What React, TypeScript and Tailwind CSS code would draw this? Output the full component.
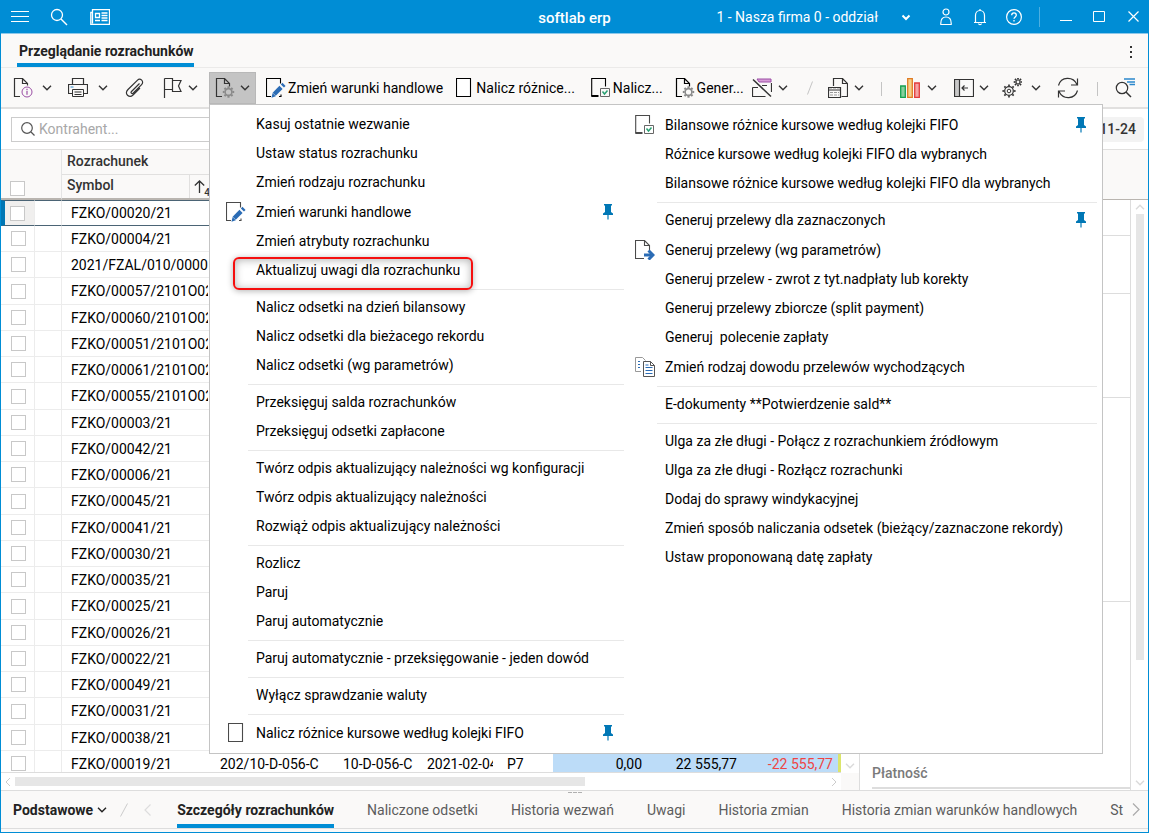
import React from 'react';

type IconName = 'pencil' | 'page' | 'check' | 'arrow' | 'copy';

type MenuEntry = {
  label: string;
  icon?: IconName;
  pinned?: boolean;
  marked?: boolean;
};

const leftMenu: MenuEntry[][] = [
  [
    { label: 'Kasuj ostatnie wezwanie' },
    { label: 'Ustaw status rozrachunku' },
    { label: 'Zmień rodzaju rozrachunku' },
    { label: 'Zmień warunki handlowe', icon: 'pencil', pinned: true },
    { label: 'Zmień atrybuty rozrachunku' },
    { label: 'Aktualizuj uwagi dla rozrachunku', marked: true },
  ],
  [
    { label: 'Nalicz odsetki na dzień bilansowy' },
    { label: 'Nalicz odsetki dla bieżacego rekordu' },
    { label: 'Nalicz odsetki (wg parametrów)' },
  ],
  [{ label: 'Przeksięguj salda rozrachunków' }, { label: 'Przeksięguj odsetki zapłacone' }],
  [
    { label: 'Twórz odpis aktualizujący należności wg konfiguracji' },
    { label: 'Twórz odpis aktualizujący należności' },
    { label: 'Rozwiąż odpis aktualizujący należności' },
  ],
  [{ label: 'Rozlicz' }, { label: 'Paruj' }, { label: 'Paruj automatycznie' }],
  [{ label: 'Paruj automatycznie - przeksięgowanie - jeden dowód' }],
  [{ label: 'Wyłącz sprawdzanie waluty' }],
  [{ label: 'Nalicz różnice kursowe według kolejki FIFO', icon: 'page', pinned: true }],
];

const rightMenu: MenuEntry[][] = [
  [
    { label: 'Bilansowe różnice kursowe według kolejki FIFO', icon: 'check', pinned: true },
    { label: 'Różnice kursowe według kolejki FIFO dla wybranych' },
    { label: 'Bilansowe różnice kursowe według kolejki FIFO dla wybranych' },
  ],
  [
    { label: 'Generuj przelewy dla zaznaczonych', pinned: true },
    { label: 'Generuj przelewy (wg parametrów)', icon: 'arrow' },
    { label: 'Generuj przelew - zwrot z tyt.nadpłaty lub korekty' },
    { label: 'Generuj przelewy zbiorcze (split payment)' },
    { label: 'Generuj  polecenie zapłaty' },
    { label: 'Zmień rodzaj dowodu przelewów wychodzących', icon: 'copy' },
  ],
  [{ label: 'E-dokumenty **Potwierdzenie sald**' }],
  [
    { label: 'Ulga za złe długi - Połącz z rozrachunkiem źródłowym' },
    { label: 'Ulga za złe długi - Rozłącz rozrachunki' },
    { label: 'Dodaj do sprawy windykacyjnej' },
    { label: 'Zmień sposób naliczania odsetek (bieżący/zaznaczone rekordy)' },
    { label: 'Ustaw proponowaną datę zapłaty' },
  ],
];

const symbols = [
  'FZKO/00020/21',
  'FZKO/00004/21',
  '2021/FZAL/010/0000',
  'FZKO/00057/2101O02',
  'FZKO/00060/2101O02',
  'FZKO/00051/2101O02',
  'FZKO/00061/2101O02',
  'FZKO/00055/2101O02',
  'FZKO/00003/21',
  'FZKO/00042/21',
  'FZKO/00006/21',
  'FZKO/00045/21',
  'FZKO/00041/21',
  'FZKO/00030/21',
  'FZKO/00035/21',
  'FZKO/00025/21',
  'FZKO/00026/21',
  'FZKO/00022/21',
  'FZKO/00049/21',
  'FZKO/00031/21',
  'FZKO/00038/21',
  'FZKO/00019/21',
];

const bottomTabs = [
  'Szczegóły rozrachunków',
  'Naliczone odsetki',
  'Historia wezwań',
  'Uwagi',
  'Historia zmian',
  'Historia zmian warunków handlowych',
  'St',
];

const Svg: React.FC<{ w?: number; h?: number; className?: string; children: React.ReactNode }> = ({
  w = 20,
  h = 20,
  className = '',
  children,
}) => (
  <svg
    width={w}
    height={h}
    viewBox={`0 0 ${w} ${h}`}
    fill="none"
    stroke="currentColor"
    aria-hidden="true"
    className={`shrink-0 ${className}`}
  >
    {children}
  </svg>
);

const Chevron: React.FC<{ className?: string }> = ({ className = '' }) => (
  <Svg w={10} h={6} className={className}>
    <path d="M1 .8l4 4 4-4" strokeWidth={1.4} />
  </Svg>
);

const Gear: React.FC<{ x: number; y: number; r: number; width?: number; color?: string }> = ({
  x,
  y,
  r,
  width = 1.6,
  color = 'currentColor',
}) => (
  <g transform={`translate(${x} ${y})`} stroke={color}>
    <circle r={r} strokeWidth={width} />
    {[0, 45, 90, 135, 180, 225, 270, 315].map((a) => (
      <path key={a} d={`M0 ${-r - 0.5}v-1.8`} strokeWidth={width + 0.5} transform={`rotate(${a})`} />
    ))}
  </g>
);

const DocGear = () => (
  <Svg>
    <path d="M7 18.5H1.5V.5h8l5 5v3M9.5.5v5h5" strokeWidth={1.2} />
    <Gear x={13.5} y={14} r={3.4} color="#8a8a8a" />
  </Svg>
);

const PencilPage = () => (
  <Svg>
    <path d="M5 18.5H.5V.5h14v5M13 18.5h2v-2" strokeWidth={1.1} />
    <path d="M8.2 16.2l6.8-6.8" stroke="#2b6cb5" strokeWidth={4.4} />
    <path d="M6.6 15l3.200 3.200-4.300 1.500z" fill="#2b6cb5" stroke="none" />
    <path d="M16.400 8l1.600-1.600" stroke="#2b6cb5" strokeWidth={4.400} />
  </Svg>
);

const EmptyPage = () => (
  <Svg w={16}>
    <path d="M.5.5h14v18H.5z" strokeWidth={1.1} fill="#fff" />
  </Svg>
);

const CheckPage = () => (
  <Svg>
    <path d="M8 18H.7V.5h13.800v8" strokeWidth={1.1} />
    <path d="M.5 18H7" strokeWidth={2} />
    <path d="M9.500 10.500h9v8h-9z" stroke="#666" />
    <path d="M11.500 13.500l2 2.500 3-3.500" stroke="#2ba173" strokeWidth={1.5} />
  </Svg>
);

const menuIcons: Record<IconName, React.ReactNode> = {
  pencil: <PencilPage />,
  page: <EmptyPage />,
  check: <CheckPage />,
  arrow: (
    <Svg>
      <path d="M9 18.500H.5V.5h9l5 5V10M9.500.5v5h5" strokeWidth={1.1} />
      <path d="M9 15h9" stroke="#2b6cb5" strokeWidth={3} />
      <path d="M13.500 10.500L18 15l-4.500 4.500" stroke="#2b6cb5" strokeWidth={3} />
    </Svg>
  ),
  copy: (
    <Svg>
      <path d="M6 14.500H.5V.5h7l3 3" stroke="#999" />
      <path d="M3 4.500h2M3 7.500h2M3 10.500h2" stroke="#2b6cb5" />
      <path d="M8.500 4.500h7l4 4v11h-11zM15.500 4.500v4h4" stroke="#555" fill="#fff" />
      <path d="M10.500 10.500h7M10.500 13.500h7M10.500 16.500h7M10.500 8h3" stroke="#2b6cb5" />
    </Svg>
  ),
};

const Pin = () => (
  <Svg w={10} h={16} className="text-[#0077b5]">
    <path d="M1 0h8v1.500H8V8l2 1.500V11H0V9.500L2 8V1.500H1z" fill="currentColor" stroke="none" />
    <path d="M5 10v5.500" strokeWidth={1.200} />
  </Svg>
);

const MenuColumn: React.FC<{ groups: MenuEntry[][]; className: string }> = ({ groups, className }) => (
  <div className={className}>
    {groups.map((group, g) => (
      <React.Fragment key={g}>
        {g > 0 && (
          <div className="ml-[33px] flex h-2 items-center">
            <div className="h-px w-full bg-[#e8e8e8]" />
          </div>
        )}
        {group.map((item) => (
          <button
            key={item.label}
            role="menuitem"
            className={`relative flex w-full items-center text-left whitespace-pre ${item.icon ? 'h-[30px]' : 'h-[29px] pb-px'}`}
          >
            {item.marked && (
              <span className="absolute top-px left-[18px] h-[33px] w-[240px] rounded-md border-2 border-[#f50f0f] shadow-[0_1px_6px_rgba(0,0,0,0.3),inset_0_1px_9px_rgba(0,0,0,0.3)]" />
            )}
            <span className="flex w-[41px] shrink-0 justify-center text-[#4a4a4a]">
              {item.icon && menuIcons[item.icon]}
            </span>
            <span className="relative flex-1">{item.label}</span>
            {item.pinned && (
              <span className="mr-[11px]">
                <Pin />
              </span>
            )}
          </button>
        ))}
      </React.Fragment>
    ))}
  </div>
);

const TitleBar = () => (
  <header className="relative flex h-[33px] shrink-0 items-center bg-[#008dd5] pr-[9px] pl-[10px] text-white">
    <button aria-label="Menu">
      <Svg w={18} h={12}>
        <path d="M0 .5h18M0 5.500h18M0 10.500h18" strokeWidth={1.200} />
      </Svg>
    </button>
    <button aria-label="Szukaj" className="ml-[21px]">
      <Svg w={18} h={18}>
        <circle cx={7} cy={7} r={5.500} strokeWidth={1.300} />
        <path d="M11 11l6 6" strokeWidth={1.400} />
      </Svg>
    </button>
    <button aria-label="Wiadomości" className="ml-[22px]">
      <Svg w={20} h={16}>
        <path d="M2.500.5h17v15H.8V3.500h1.700zM2.500 3.500v11" strokeWidth={1.300} />
        <path d="M5.500 4.500h4v4h-4zM11.500 4h6M11.500 6.500h6M11.500 9h6M5 11.500h5M11.500 11.500h6" strokeWidth={1.300} />
      </Svg>
    </button>
    <h1 className="absolute left-1/2 -translate-x-1/2 pt-[3px] text-[15px] font-medium">softlab erp</h1>
    <button className="ml-auto flex items-center pt-px text-sm">
      1 - Nasza firma 0 - oddział
      <Svg w={10} h={7} className="ml-[23px]">
        <path d="M1.500 1.500L5 5l3.500-3.500" strokeWidth={2} />
      </Svg>
    </button>
    <button aria-label="Użytkownik" className="ml-[29px]">
      <Svg w={12} h={18}>
        <circle cx={6} cy={4} r={3} strokeWidth={1.200} />
        <path d="M.8 16.500c-.3-5.500 2-7.500 5.200-7.500s5.500 2 5.200 7.500z" strokeWidth={1.200} />
      </Svg>
    </button>
    <button aria-label="Powiadomienia" className="ml-[22px]">
      <Svg w={12} h={18}>
        <path d="M0 14.500h12M1.500 14.500V7.500C1.500 4.500 3.500 2.500 6 2.500s4.500 2 4.500 5v7M6 2.500V1M4.500 15.500c.3 1.500 2.700 1.500 3 0" strokeWidth={1.200} />
      </Svg>
    </button>
    <button aria-label="Pomoc" className="ml-5">
      <Svg w={16} h={16}>
        <circle cx={8} cy={8} r={7.400} strokeWidth={1.200} />
        <path d="M5.700 6.200c0-3 4.600-3 4.600 0 0 1.600-2.300 1.800-2.300 3.600M8 11v1.500" strokeWidth={1.300} />
      </Svg>
    </button>
    <span className="ml-[17px] h-5 w-px bg-white/30" />
    <button aria-label="Minimalizuj" className="ml-5">
      <Svg w={12} h={12}>
        <path d="M0 9.500h12" />
      </Svg>
    </button>
    <button aria-label="Maksymalizuj" className="ml-[21px]">
      <Svg w={12} h={12}>
        <path d="M.5.5h11v10H.5z" />
      </Svg>
    </button>
    <button aria-label="Zamknij" className="ml-[23px]">
      <Svg w={11} h={11}>
        <path d="M.5.500l10 10M10.500.5l-10 10" strokeWidth={1.200} />
      </Svg>
    </button>
  </header>
);

const ActionMenu = () => (
  <div
    role="menu"
    className="absolute top-full left-0 z-10 flex w-[894px] border border-[#c4c4c4] bg-white p-[5px] text-sm text-black"
  >
    <MenuColumn groups={leftMenu} className="w-[409px]" />
    <MenuColumn groups={rightMenu} className="flex-1" />
  </div>
);

const Toolbar = () => (
  <div className="flex h-[41px] shrink-0 items-start border-b-2 border-[#e1e0df] pl-3 text-sm text-[#333]">
    <button aria-label="Informacje" className="flex h-10 items-center">
      <Svg>
        <path d="M7 18.500H1.500V.5h8l5 5v2M9.500.5v5h5" strokeWidth={1.200} />
        <circle cx={14} cy={14} r={5} stroke="#9b4fa5" />
        <path d="M14 12.800v4M14 10.800v1.200" stroke="#9b4fa5" strokeWidth={1.200} />
      </Svg>
      <Chevron className="ml-[9px]" />
    </button>
    <button aria-label="Drukuj" className="ml-4 flex h-10 items-center">
      <Svg>
        <path d="M4.500 6V.5h11V6M4.500 15.500h-4v-9h19v9h-4" strokeWidth={1.200} />
        <path d="M4.500 11.500h11v7h-11zM6.500 14h7M6.500 16.500h7" />
        <path d="M2.500 9h3" stroke="#2b88cc" />
      </Svg>
      <Chevron className="ml-[10px]" />
    </button>
    <button aria-label="Załącznik" className="ml-[17px] flex h-10 items-center">
      <Svg>
        <path d="M14.500 5.500l-8 8c-1.200 1.200.4 2.800 1.600 1.600l8.500-8.500c3-3-1.300-7.300-4.300-4.300L3 11.500c-4.500 4.500 1.500 9 5 5.500l7-7" strokeWidth={1.200} />
      </Svg>
    </button>
    <button aria-label="Flaga" className="ml-[18px] flex h-10 items-center">
      <Svg>
        <path d="M1.500 20V.5M1.500.5h8v11h-8M9.500 2.500h8.500l-2.500 5.500 2.500 5.500H9.500v-2" strokeWidth={1.200} />
      </Svg>
      <Chevron className="ml-[5px]" />
    </button>
    <div className="relative mt-1 ml-[11px]">
      <button
        aria-label="Akcje"
        aria-haspopup="menu"
        aria-expanded="true"
        className="flex h-8 w-[47px] items-center border border-[#b8b8b8] bg-[#c4c4c4] pl-[5px]"
      >
        <DocGear />
        <Chevron className="ml-[5px]" />
      </button>
      <ActionMenu />
    </div>
    <button className="ml-[10px] flex h-10 items-center gap-[2px] text-black">
      <PencilPage />
      Zmień warunki handlowe
    </button>
    <button className="ml-[13px] flex h-10 items-center gap-1 text-black">
      <EmptyPage />
      Nalicz różnice...
    </button>
    <button className="ml-4 flex h-10 items-center gap-[2px] text-black">
      <CheckPage />
      Nalicz...
    </button>
    <button className="ml-3 flex h-10 items-center gap-[2px] text-black">
      <DocGear />
      Gener...
    </button>
    <button aria-label="Wyłącz filtr" className="ml-2 flex h-10 items-center">
      <Svg>
        <path d="M5 1h14v3H7z" fill="#d79bd7" stroke="#9b4fa5" />
        <path d="M19.500 5v9M.5 9.500v9h13M.5 9.500H6M10 7.500h5" strokeWidth={1.200} />
        <path d="M1 1.500l18 17" strokeWidth={1.500} />
      </Svg>
      <Chevron className="ml-[6px]" />
    </button>
    <Svg w={6} h={14} className="mt-[13px] ml-[19px] text-[#c4c4c4]">
      <path d="M.5 13.500l5-13" />
    </Svg>
    <button aria-label="Raporty" className="ml-[15px] flex h-10 items-center">
      <Svg>
        <path d="M5.500 8V.5h9l5 5v13h-6M14.500.5v5h5" strokeWidth={1.200} />
        <path d="M.5 9.500h12v10H.5zM.5 12h12" strokeWidth={1.200} />
        <path d="M1 11h11M2 14.500h9M2 17h9" stroke="#999" strokeDasharray="3 1" />
      </Svg>
      <Chevron className="ml-[6px]" />
    </button>
    <span className="mt-[14px] ml-[17px] h-[14px] w-px bg-[#c4c4c4]" />
    <button aria-label="Wykresy" className="ml-[18px] flex h-10 items-center">
      <Svg w={21} h={20}>
        <path d="M.7 8h4.600v11.300H.7z" fill="#86cf9c" stroke="#15a050" strokeWidth={1.300} />
        <path d="M7.700.7h4.600v18.600H7.700z" fill="#f6cf8a" stroke="#e07c24" strokeWidth={1.300} />
        <path d="M14.700 5h4.600v14.300h-4.600z" fill="#f5a3a3" stroke="#e23b3b" strokeWidth={1.300} />
      </Svg>
      <Chevron className="ml-[6px]" />
    </button>
    <button aria-label="Panel" className="ml-[17px] flex h-10 items-center">
      <Svg>
        <path d="M.5 1.500h5v17h-5z" fill="#c8c8c8" stroke="#888" />
        <path d="M.5 1.500h19v17H.5zM5.500 1.500v17M14 10H8M10.500 7.500L8 10l2.500 2.500" strokeWidth={1.200} />
      </Svg>
      <Chevron className="ml-[5px]" />
    </button>
    <button aria-label="Ustawienia" className="ml-[13px] flex h-10 items-center">
      <Svg>
        <Gear x={7} y={13} r={4.300} width={1.200} />
        <circle cx={7} cy={13} r={1.800} />
        <Gear x={16} y={4} r={2} width={1.200} />
      </Svg>
      <Chevron className="ml-[9px]" />
    </button>
    <button aria-label="Odśwież" className="ml-4 flex h-10 items-center">
      <Svg w={22} h={22}>
        <path d="M1.500 8.500C4-.5 16-1 20 7.500M20.500 1.500v6.500h-6.500M20.500 13.500C18 22.500 6 23 2 14.500M1.500 20.500V14H8" strokeWidth={1.200} />
      </Svg>
    </button>
    <span className="mt-[14px] ml-[18px] h-[14px] w-px bg-[#c4c4c4]" />
    <button aria-label="Szukaj w tabeli" className="ml-[17px] flex h-10 items-center">
      <Svg>
        <circle cx={7} cy={10} r={5.700} strokeWidth={1.200} />
        <path d="M11 14l5 5" strokeWidth={1.500} />
        <path d="M9 1h11M12 4h8M14.500 6.500H20" stroke="#2b88cc" strokeWidth={1.300} />
      </Svg>
    </button>
  </div>
);

const CheckBox: React.FC<{ label: string }> = ({ label }) => (
  <input
    type="checkbox"
    aria-label={label}
    className="block size-[15px] appearance-none border border-[#c8c8c8] bg-white"
  />
);

const DataTable = () => (
  <table className="w-full table-fixed border-separate border-spacing-0 text-sm text-black">
    <colgroup>
      <col className="w-[34px]" />
      <col className="w-[27px]" />
      <col className="w-[148px]" />
      <col className="w-[123px]" />
      <col className="w-[84px]" />
      <col className="w-[80px]" />
      <col className="w-[56px]" />
      <col className="w-[95px]" />
      <col className="w-[95px]" />
      <col />
    </colgroup>
    <thead className="bg-[#faf9f8] text-left text-[#333]">
      <tr className="h-[25px]">
        <th rowSpan={2} className="border-b-2 border-[#b9b5b0] p-0 pb-[2px] pl-[9px] align-bottom">
          <CheckBox label="Zaznacz wszystkie" />
        </th>
        <th rowSpan={2} className="border-r border-b-2 border-r-[#e4e4e4] border-b-[#b9b5b0]" />
        <th colSpan={8} className="border-b border-[#e1e0df] p-0 pb-[2px] pl-[5px] font-medium">
          Rozrachunek
        </th>
      </tr>
      <tr className="h-[25px]">
        <th className="border-b-2 border-[#b9b5b0] p-0 pl-[5px] font-medium">
          <div className="flex h-[23px] items-center">
            <span className="pb-[3px]">Symbol</span>
            <span className="ml-auto flex h-full items-center border-l border-[#e1e0df] pl-1">
              <Svg w={11} h={13}>
                <path d="M5.500 13V1M.8 5.500L5.500 1l4.700 4.500" strokeWidth={1.300} />
              </Svg>
              <span className="-ml-px pt-3 text-[10px] leading-none">4</span>
            </span>
          </div>
        </th>
        <th colSpan={7} className="border-b-2 border-[#b9b5b0]" />
      </tr>
    </thead>
    <tbody>
      {symbols.map((symbol, i) => {
        const selected = i === 0;
        const last = i === symbols.length - 1;
        const line = selected ? 'border-y border-y-[#4b6475]' : 'border-b border-b-[#ececec]';
        return (
          <tr key={symbol} className="h-[26px] [&:nth-child(4n)]:h-[27px]">
            <td
              className={`border-r border-r-[#ececec] p-0 ${line} ${selected ? 'border-l-4 border-l-[#0077b5] bg-[#f0efee] pl-[5px]' : 'pl-[10px]'}`}
            >
              <CheckBox label={symbol} />
            </td>
            <td className={`border-r border-r-[#ececec] ${line}`} />
            <td className={`p-0 pr-[2px] pl-[9px] ${line}`}>
              <div className="overflow-hidden whitespace-nowrap">{symbol}</div>
            </td>
            <td className={`p-0 pl-[10px] ${line}`}>{last && '202/10-D-056-C'}</td>
            <td className={`p-0 pl-[10px] ${line}`}>{last && '10-D-056-C'}</td>
            <td className={`p-0 pr-1 pl-[10px] ${line}`}>
              {last && <div className="overflow-hidden whitespace-nowrap">2021-02-04</div>}
            </td>
            <td className={`p-0 pl-[10px] ${line}`}>{last && 'P7'}</td>
            <td className={`bg-[#bcdcf8] p-0 pr-[6px] text-right ${line}`}>{last && '0,00'}</td>
            <td className={`bg-[#bcdcf8] p-0 pr-[6px] text-right ${line}`}>{last && '22 555,77'}</td>
            <td
              className={`border-r-[3px] border-r-[#dbe56b] bg-[#bcdcf8] p-0 pr-[5px] text-right text-[#ee4444] ${line}`}
            >
              {last && '-22 555,77'}
            </td>
          </tr>
        );
      })}
    </tbody>
  </table>
);

const DetailsPanel = () => (
  <aside className="flex w-[289px] shrink-0 flex-col border-t border-[#e1e0df]">
    <div className="h-[50px] shrink-0 border-b border-[#b9b5b0] bg-[#faf9f8]" />
    <div className="flex min-h-0 flex-1">
      <div className="flex flex-1 flex-col overflow-hidden border-r border-l border-[#dddddd]">
        <div className="h-9 shrink-0 border-b border-[#dddddd]" />
        <div className="h-[58px] shrink-0 border-b border-[#dddddd]" />
        <div className="h-[104px] shrink-0 border-b border-[#dddddd]" />
        <div className="h-[204px] shrink-0 border-b border-[#dddddd]" />
        <h2 className="mt-auto mb-px ml-3 border-b-2 border-[#dddddd] pb-1 text-sm font-medium text-[#7a7a7a]">
          Płatność
        </h2>
      </div>
      <div className="flex w-[17px] flex-col items-center py-1 text-[#dadada]">
        <Chevron className="rotate-180" />
        <div className="mt-1 h-[446px] w-2 bg-[#e6e6e6]" />
        <Chevron className="mt-auto" />
      </div>
    </div>
  </aside>
);

const BottomTabs = () => (
  <nav className="relative flex h-[38px] shrink-0 items-center border-b border-[#dddddd] pl-3 text-sm text-[#5c5c5c]">
    <span className="absolute top-px left-1/2 flex -translate-x-1/2 gap-px">
      <span className="h-px w-1 bg-[#b0b0b0]" />
      <span className="h-px w-1 bg-[#b0b0b0]" />
      <span className="h-px w-1 bg-[#b0b0b0]" />
    </span>
    <button className="flex items-center gap-1 font-bold text-[#222]">
      Podstawowe
      <Chevron />
    </button>
    <Svg w={8} h={14} className="ml-[13px] text-[#cccccc]">
      <path d="M.5 13.500l7-13" />
    </Svg>
    <button aria-label="Poprzednie" className="ml-4 text-[#dddddd]">
      <Svg w={7} h={12}>
        <path d="M6.500.5L1 6l5.500 5.500" strokeWidth={1.200} />
      </Svg>
    </button>
    <div className="ml-[26px] flex min-w-0 flex-1 gap-[33px] overflow-hidden whitespace-nowrap">
      {bottomTabs.map((tab, i) => (
        <button
          key={tab}
          className={`h-[37px] shrink-0 border-b-4 pt-1 ${i === 0 ? 'border-[#008dd5] font-bold text-[#222]' : 'border-transparent'}`}
        >
          {tab}
        </button>
      ))}
    </div>
    <button aria-label="Następne" className="mr-2 text-[#aaaaaa]">
      <Svg w={8} h={13}>
        <path d="M1 .5l6 6-6 6" strokeWidth={1.200} />
      </Svg>
    </button>
  </nav>
);

const App: React.FC = () => (
  <div className="flex h-screen flex-col border-x border-b border-[#008dd5] bg-[#faf9f8] pb-[3px] font-[Roboto,sans-serif]">
    <TitleBar />
    <div className="flex h-[35px] shrink-0 items-end border-t border-b border-t-[#8cc8ea] border-b-[#ebeae9] px-4">
      <button className="h-[33px] border-b-4 border-[#008dd5] pt-[5px] pl-[2px] text-sm font-bold text-[#222]">
        Przeglądanie rozrachunków
      </button>
      <button aria-label="Więcej" className="mb-[9px] ml-auto">
        <Svg w={2} h={12}>
          <path d="M1 0v12" stroke="#333" strokeWidth={2} strokeDasharray="2 3" />
        </Svg>
      </button>
    </div>
    <Toolbar />
    <div className="flex h-[40px] shrink-0 items-center bg-white pr-1 pl-[10px] text-sm">
      <label className="flex h-[25px] w-[250px] items-center border border-[#cccccc] pl-[9px] text-[#555]">
        <Svg w={14} h={14}>
          <circle cx={6} cy={6} r={5.300} strokeWidth={1.200} />
          <path d="M10 10l3.500 3.500" strokeWidth={1.300} />
        </Svg>
        <input
          type="text"
          aria-label="Kontrahent"
          placeholder="Kontrahent..."
          className="ml-1 w-full bg-transparent outline-none placeholder:text-[#a8a8a8]"
        />
      </label>
      <span className="ml-auto flex h-[25px] items-center rounded-sm bg-[#f3f3f3] px-2 font-medium text-[#333]">
        2021-11-24
      </span>
    </div>
    <main className="flex min-h-0 flex-1 border-b border-[#dddddd] bg-white">
      <section className="flex min-w-0 flex-1 flex-col border-t border-[#e1e0df]">
        <div className="flex min-h-0 flex-1">
          <div className="min-w-0 flex-1 overflow-hidden border-b border-[#dddddd]">
            <DataTable />
          </div>
          <div className="flex w-[18px] flex-col items-center text-[#dadada]">
            <div className="h-[50px] w-full border-b border-[#b9b5b0] bg-[#faf9f8]" />
            <Chevron className="mt-auto mb-1" />
          </div>
        </div>
        <div className="flex h-[17px] shrink-0">
          <div className="flex flex-1 items-center px-1 text-[#cccccc]">
            <Svg w={6} h={10}>
              <path d="M5 1L1 5l4 4" />
            </Svg>
            <div className="ml-1 h-[9px] w-[570px] bg-[#e6e6e6]" />
            <Svg w={6} h={10} className="ml-auto">
              <path d="M1 1l4 4-4 4" />
            </Svg>
          </div>
          <div className="w-[18px] bg-[#faf9f8]" />
        </div>
      </section>
      <DetailsPanel />
    </main>
    <BottomTabs />
  </div>
);

export default App;
